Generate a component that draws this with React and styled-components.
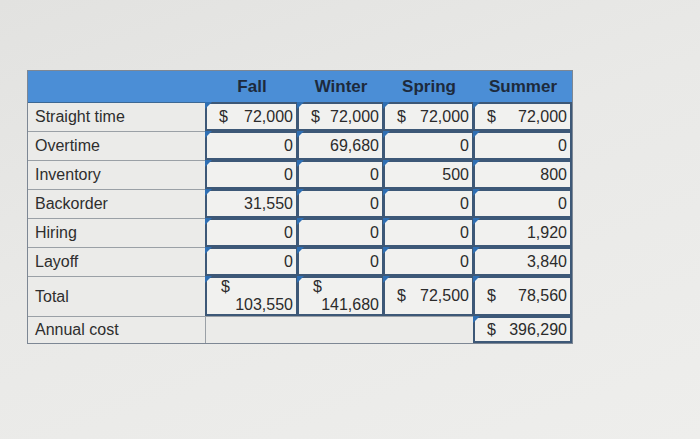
import React from "react";
import styled, { createGlobalStyle } from "styled-components";

const GlobalStyle = createGlobalStyle`
  body {
    margin: 0;
    background: linear-gradient(160deg, #e2e2e0 0%, #e9e9e7 45%, #eeeeec 100%);
    font-family: "Liberation Sans", Arial, sans-serif;
  }
`;

const seasons = ["Fall", "Winter", "Spring", "Summer"];

const rows = [
  { label: "Straight time", values: ["$|72,000", "$|72,000", "$|72,000", "$|72,000"] },
  { label: "Overtime", values: ["0", "69,680", "0", "0"] },
  { label: "Inventory", values: ["0", "0", "500", "800"] },
  { label: "Backorder", values: ["31,550", "0", "0", "0"] },
  { label: "Hiring", values: ["0", "0", "0", "1,920"] },
  { label: "Layoff", values: ["0", "0", "0", "3,840"] },
];

const totals = [
  { value: "103,550", wrap: true },
  { value: "141,680", wrap: true },
  { value: "72,500" },
  { value: "78,560" },
];

const COLS = "178px 92px 86px 90px 98px";

const Page = styled.div`
  padding: 70px 0 0 27px;
  min-height: 439px;
  box-sizing: border-box;
`;

const Table = styled.div`
  width: 544px;
  border: 1px solid #7d8794;
  background: #ebebe9;
`;

const Row = styled.div`
  display: grid;
  grid-template-columns: ${COLS};
  height: ${(p) => p.$h || 28}px;
  border-top: ${(p) => (p.$first ? "none" : "1px solid #9aa0a6")};
`;

const Header = styled(Row)`
  background: #4b8ed6;
  height: 31px;
  border-bottom: 1px solid #3c6894;
`;

const HeadCell = styled.div`
  display: flex;
  align-items: center;
  justify-content: center;
  font-size: 17px;
  font-weight: bold;
  color: #1d2a3c;
`;

const Label = styled.div`
  display: flex;
  align-items: center;
  padding-left: 7px;
  font-size: 16px;
  color: #2e2e2e;
  border-right: 1px solid #9aa0a6;
`;

const Input = styled.div`
  position: relative;
  box-sizing: border-box;
  border: 2px solid #3d5877;
  margin: -1px 0 0 -1px;
  background: #f1f1ef;
  display: flex;
  align-items: ${(p) => (p.$wrap ? "stretch" : "center")};
  justify-content: ${(p) => (p.$dollar ? "space-between" : "flex-end")};
  flex-direction: ${(p) => (p.$wrap ? "column" : "row")};
  padding: ${(p) => (p.$wrap ? "0 3px 0 14px" : "0 3px 0 12px")};
  font-size: 16px;
  color: #2b2b2b;

  &::before {
    content: "";
    position: absolute;
    top: -2px;
    left: -2px;
    border-top: 7px solid #2f6fb3;
    border-right: 7px solid transparent;
  }
`;

const Empty = styled.div``;

const Dollar = styled.span``;

const WrapLine = styled.span`
  text-align: ${(p) => p.$align};
  line-height: 18px;
`;

function ValueCell({ raw }) {
  if (raw.includes("|")) {
    const [d, n] = raw.split("|");
    return (
      <Input $dollar>
        <Dollar>{d}</Dollar>
        <span>{n}</span>
      </Input>
    );
  }
  return <Input>{raw}</Input>;
}

export default function App() {
  return (
    <>
      <GlobalStyle />
      <Page>
        <Table>
          <Header $first>
            <Empty />
            {seasons.map((s) => (
              <HeadCell key={s}>{s}</HeadCell>
            ))}
          </Header>
          {rows.map((r, i) => (
            <Row key={r.label} $first={i === 0}>
              <Label>{r.label}</Label>
              {r.values.map((v, j) => (
                <ValueCell key={j} raw={v} />
              ))}
            </Row>
          ))}
          <Row $h={39}>
            <Label>Total</Label>
            {totals.map((t, j) =>
              t.wrap ? (
                <Input key={j} $wrap>
                  <WrapLine $align="left">$</WrapLine>
                  <WrapLine $align="right">{t.value}</WrapLine>
                </Input>
              ) : (
                <Input key={j} $dollar>
                  <Dollar>$</Dollar>
                  <span>{t.value}</span>
                </Input>
              )
            )}
          </Row>
          <Row $h={26}>
            <Label>Annual cost</Label>
            <Empty />
            <Empty />
            <Empty />
            <Input $dollar>
              <Dollar>$</Dollar>
              <span>396,290</span>
            </Input>
          </Row>
        </Table>
      </Page>
    </>
  );
}
